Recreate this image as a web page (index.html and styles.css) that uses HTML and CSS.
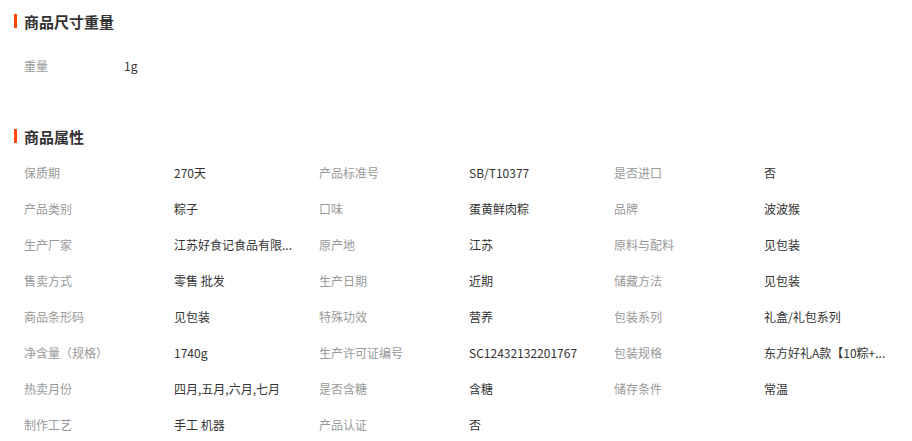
FILE: index.html
```html
<!DOCTYPE html>
<html lang="zh-CN">
<head>
  <meta charset="UTF-8">
  <title>商品参数</title>
  <link rel="stylesheet" href="styles.css">
</head>
<body>
  <div class="section section-size">
    <div class="sec-title">商品尺寸重量</div>
    <ul class="attr-list">
      <li><span class="attr-name">重量</span><span class="attr-value">1g</span></li>
    </ul>
  </div>

  <div class="section section-attrs">
    <div class="sec-title">商品属性</div>
    <ul class="attr-list">
      <li><span class="attr-name">保质期</span><span class="attr-value">270天</span></li>
      <li><span class="attr-name">产品标准号</span><span class="attr-value">SB/T10377</span></li>
      <li><span class="attr-name">是否进口</span><span class="attr-value">否</span></li>
      <li><span class="attr-name">产品类别</span><span class="attr-value">粽子</span></li>
      <li><span class="attr-name">口味</span><span class="attr-value">蛋黄鲜肉粽</span></li>
      <li><span class="attr-name">品牌</span><span class="attr-value">波波猴</span></li>
      <li><span class="attr-name">生产厂家</span><span class="attr-value">江苏好食记食品有限...</span></li>
      <li><span class="attr-name">原产地</span><span class="attr-value">江苏</span></li>
      <li><span class="attr-name">原料与配料</span><span class="attr-value">见包装</span></li>
      <li><span class="attr-name">售卖方式</span><span class="attr-value">零售 批发</span></li>
      <li><span class="attr-name">生产日期</span><span class="attr-value">近期</span></li>
      <li><span class="attr-name">储藏方法</span><span class="attr-value">见包装</span></li>
      <li><span class="attr-name">商品条形码</span><span class="attr-value">见包装</span></li>
      <li><span class="attr-name">特殊功效</span><span class="attr-value">营养</span></li>
      <li><span class="attr-name">包装系列</span><span class="attr-value">礼盒/礼包系列</span></li>
      <li><span class="attr-name">净含量（规格）</span><span class="attr-value">1740g</span></li>
      <li><span class="attr-name">生产许可证编号</span><span class="attr-value">SC12432132201767</span></li>
      <li><span class="attr-name">包装规格</span><span class="attr-value">东方好礼A款【10粽+...</span></li>
      <li><span class="attr-name">热卖月份</span><span class="attr-value">四月,五月,六月,七月</span></li>
      <li><span class="attr-name">是否含糖</span><span class="attr-value">含糖</span></li>
      <li><span class="attr-name">储存条件</span><span class="attr-value">常温</span></li>
      <li><span class="attr-name">制作工艺</span><span class="attr-value">手工 机器</span></li>
      <li><span class="attr-name">产品认证</span><span class="attr-value">否</span></li>
    </ul>
  </div>
</body>
</html>
```

FILE: styles.css
```css
body {
  margin: 0;
  padding-top: 11px;
  background: #fff;
  font-family: "Noto Sans CJK SC", "Microsoft YaHei", sans-serif;
  font-size: 12px;
  color: #333;
}
.section {
  padding-left: 14px;
}
.sec-title {
  display: flex;
  align-items: center;
  height: 20px;
  font-size: 15px;
  font-weight: bold;
  color: #333;
}
.sec-title::before {
  content: "";
  width: 3px;
  height: 14px;
  margin-right: 7px;
  background: #ff4400;
}
.attr-list {
  list-style: none;
  margin: 0;
  padding: 0 0 0 10px;
  display: flex;
  flex-wrap: wrap;
}
.attr-list li {
  display: flex;
  width: 295px;
  height: 36px;
  line-height: 36px;
}
.attr-name {
  width: 150px;
  flex-shrink: 0;
  color: #999;
}
.attr-value {
  white-space: nowrap;
  color: #333;
}
.section-size .attr-list {
  padding-top: 17px;
}
.section-size .attr-name {
  width: 100px;
}
.section-attrs {
  margin-top: 42px;
}
.section-attrs .attr-list {
  padding-top: 9px;
}
```
